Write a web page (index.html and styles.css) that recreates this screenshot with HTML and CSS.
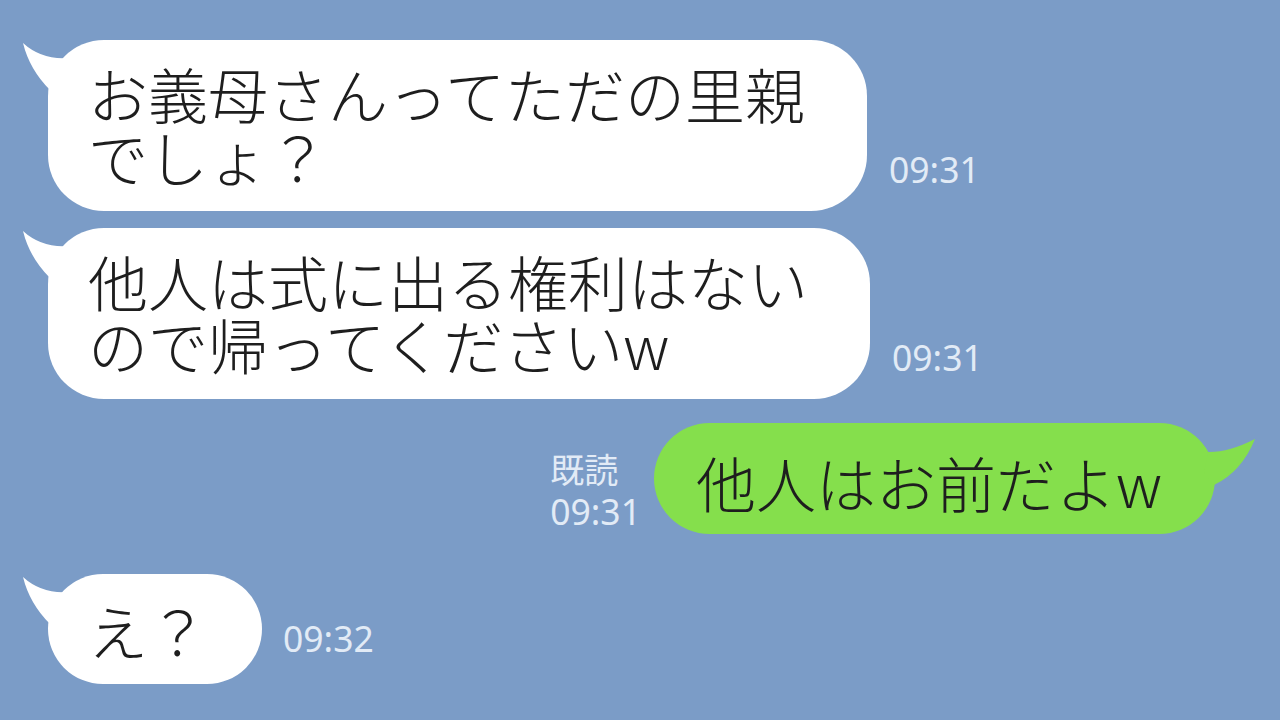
FILE: index.html
```html
<!DOCTYPE html>
<html lang="ja">
<head>
<meta charset="utf-8">
<title>chat</title>
<link rel="stylesheet" href="styles.css">
</head>
<body>
<main class="chat">
  <div class="row row-in r1">
    <div class="bubble bubble-white">
      <svg class="tail tail-left" width="60" height="60" viewBox="0 0 60 60"><path d="M5,3 Q23,19.5 49,18 L40,40 L32,50 Q11.5,29.5 5,3 Z" fill="#ffffff"/></svg>
      <p class="msg">お義母さんってただの里親<br>でしょ？</p>
    </div>
    <span class="time">09:31</span>
  </div>
  <div class="row row-in r2">
    <div class="bubble bubble-white">
      <svg class="tail tail-left" width="60" height="60" viewBox="0 0 60 60"><path d="M5,3 Q23,19.5 49,18 L40,40 L32,50 Q11.5,29.5 5,3 Z" fill="#ffffff"/></svg>
      <p class="msg">他人は式に出る権利はない<br>ので帰ってくださいw</p>
    </div>
    <span class="time">09:31</span>
  </div>
  <div class="row row-out r3">
    <div class="meta">
      <span class="meta-read">既読</span>
      <span class="meta-time">09:31</span>
    </div>
    <div class="bubble bubble-green">
      <svg class="tail tail-right" width="60" height="70" viewBox="0 0 60 70"><path d="M55,16 Q28.5,29.5 8,29 L4,50 L14,62 Q41.5,49 55,16 Z" fill="#85df4c"/></svg>
      <p class="msg">他人はお前だよw</p>
    </div>
  </div>
  <div class="row row-in r4">
    <div class="bubble bubble-white short">
      <svg class="tail tail-left" width="60" height="60" viewBox="0 0 60 60"><path d="M5,3 Q23,19.5 49,18 L40,40 L32,50 Q11.5,29.5 5,3 Z" fill="#ffffff"/></svg>
      <p class="msg">え？</p>
    </div>
    <span class="time time-short">09:32</span>
  </div>
</main>
</body>
</html>
```
FILE: styles.css
```css
* { box-sizing: border-box; }
html, body {
  margin: 0;
  padding: 0;
  width: 1280px;
  height: 720px;
  overflow: hidden;
  background: #7b9cc7;
}
.chat {
  display: flex;
  flex-direction: column;
  padding: 40px 65px 0 48px;
  font-family: "Noto Sans CJK JP", "Noto Sans", sans-serif;
}
.row {
  display: flex;
  align-items: flex-end;
}
.row-out { justify-content: flex-end; }
.r2 { margin-top: 17px; }
.r3 { margin-top: 24px; }
.r4 { margin-top: 40px; }

.bubble {
  position: relative;
  border-radius: 56px;
}
.bubble-white {
  background: #ffffff;
  padding: 21px 62px 24px 40px;
}
.bubble-white.short {
  padding: 24px 54px 23px 40px;
}
.bubble-green {
  background: #85df4c;
  padding: 27px 53px 21px 42px;
  border-radius: 56px;
}
.msg {
  margin: 0;
  font-size: 60px;
  font-weight: 300;
  line-height: 63px;
  color: #1e1e1e;
  white-space: nowrap;
}
.tail {
  position: absolute;
  top: 0;
  display: block;
}
.tail-left { left: -30px; }
.tail-right { right: -45px; }

.time {
  font-family: "Noto Sans", "Open Sans", sans-serif;
  font-size: 35.5px;
  line-height: 40px;
  color: #e2ebf6;
  margin: 0 0 22px 22px;
}
.time-short {
  margin: 0 0 26px 21px;
}
.meta {
  display: flex;
  flex-direction: column;
  color: #e2ebf6;
  margin: 0 13px 2px 0;
}
.meta-read {
  font-family: "Noto Sans CJK JP", "Noto Sans", sans-serif;
  font-size: 34px;
  line-height: 42px;
}
.meta-time {
  font-family: "Noto Sans", "Open Sans", sans-serif;
  font-size: 35.5px;
  line-height: 42px;
}
```
